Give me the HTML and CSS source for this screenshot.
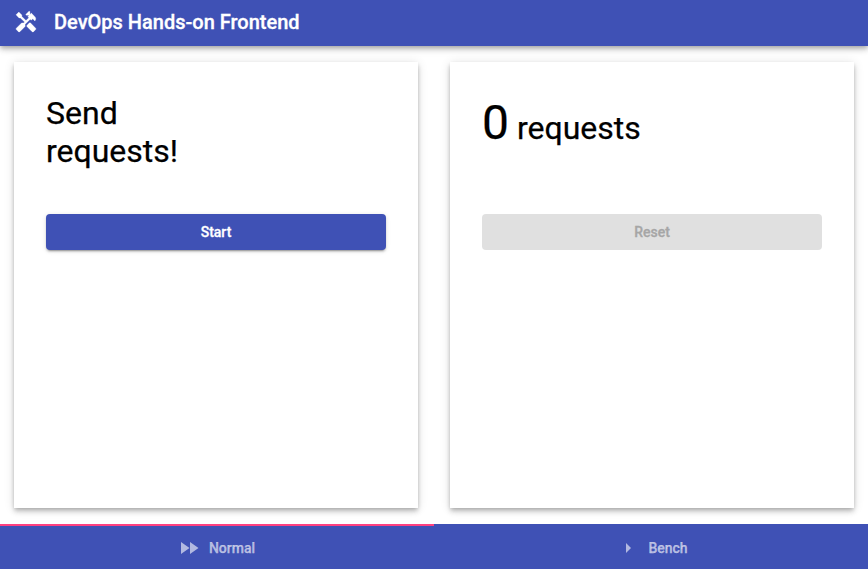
FILE: index.html
```html
<!DOCTYPE html>
<html lang="en">
<head>
<meta charset="utf-8">
<title>DevOps Hands-on Frontend</title>
<link rel="stylesheet" href="styles.css">
</head>
<body>
<header class="app-bar">
  <svg class="logo" viewBox="0 0 24 24" aria-hidden="true"><path d="M21.67 18.17l-5.3-5.3h-.99l-2.54 2.54v.99l5.3 5.3c.39.39 1.02.39 1.41 0l2.12-2.12c.39-.38.39-1.02 0-1.41z"/><path d="M17.34 10.19l1.41-1.41 2.12 2.12c1.17-1.17 1.17-3.07 0-4.24l-3.54-3.54-1.41 1.41V1.71l-.7-.71-3.54 3.54.71.71h2.83l-1.41 1.41 1.06 1.06-2.89 2.89-4.13-4.13V5.06L4.83 2.04 2 4.87 5.03 7.9h1.41l4.13 4.13-.85.85H7.6l-5.3 5.3c-.39.39-.39 1.02 0 1.41l2.12 2.12c.39.39 1.02.39 1.41 0l5.3-5.3v-2.12l5.15-5.15 1.06 1.05z"/></svg>
  <h1 class="title">DevOps Hands-on Frontend</h1>
</header>
<main class="panels">
  <section class="card">
    <div class="message">Send<br>requests!</div>
    <button class="button primary">Start</button>
  </section>
  <section class="card">
    <div class="message counter"><span class="count">0</span> requests</div>
    <button class="button" disabled>Reset</button>
  </section>
</main>
<nav class="tabs">
  <a class="tab active"><svg class="tab-icon" viewBox="0 0 24 24"><path d="M4 18l8.5-6L4 6v12zm9-12v12l8.5-6L13 6z"/></svg>Normal</a>
  <a class="tab"><svg class="tab-icon" viewBox="0 0 24 24"><path d="M10 17l5-5-5-5v10z"/></svg>Bench</a>
</nav>
</body>
</html>
```

FILE: styles.css
```css
* { box-sizing: border-box; }
body {
  margin: 0;
  height: 100vh;
  display: flex;
  flex-direction: column;
  overflow: hidden;
  background: #fff;
  color: #000;
  font-family: Roboto, sans-serif;
  -webkit-text-stroke: .25px currentColor;
}
.app-bar {
  height: 46px;
  flex: none;
  display: flex;
  align-items: center;
  gap: 16px;
  padding: 0 14px 2px;
  background: #3f51b5;
  color: #fff;
  box-shadow: 0 2px 4px -1px rgba(0,0,0,.2), 0 4px 5px rgba(0,0,0,.14), 0 1px 10px rgba(0,0,0,.12);
}
.logo { width: 24px; height: 24px; fill: currentColor; stroke: currentColor; stroke-width: .3; }
.title { margin: 0; font-size: 20px; line-height: 32px; font-weight: 500; -webkit-text-stroke-width: .3px; }
.panels {
  flex: 1;
  display: grid;
  grid-template-columns: 1fr 1fr;
  gap: 32px;
  padding: 16px 14px;
}
.card {
  display: flex;
  flex-direction: column;
  padding: 32px;
  background: #fff;
  box-shadow: 0 2px 4px -1px rgba(0,0,0,.2), 0 4px 5px rgba(0,0,0,.14), 0 1px 10px rgba(0,0,0,.12);
}
.message { height: 120px; font-size: 32px; line-height: 38px; }
.counter { padding-top: 1px; }
.count { font-size: 48px; line-height: 56px; }
.button {
  height: 36px;
  padding: 0;
  border: 0;
  border-radius: 4px;
  font: 500 14px/34px Roboto, sans-serif;
  -webkit-text-stroke: .3px currentColor;
  background: #e0e0e0;
  color: #a6a6a6;
}
.button.primary {
  background: #3f51b5;
  color: #fff;
  box-shadow: 0 3px 1px -2px rgba(0,0,0,.2), 0 2px 2px rgba(0,0,0,.14), 0 1px 5px rgba(0,0,0,.12);
}
.tabs { flex: none; height: 45px; display: flex; background: #3f51b5; }
.tab {
  flex: 1;
  display: flex;
  align-items: center;
  justify-content: center;
  gap: 8px;
  padding-left: 2px;
  border-top: 2px solid transparent;
  color: rgba(255,255,255,.6);
  font-size: 14px;
  font-weight: 500;
}
.tab.active { padding: 0 2px 0 0; border-top-color: #ff4081; }
.tab-icon { width: 24px; height: 24px; fill: currentColor; }
```
